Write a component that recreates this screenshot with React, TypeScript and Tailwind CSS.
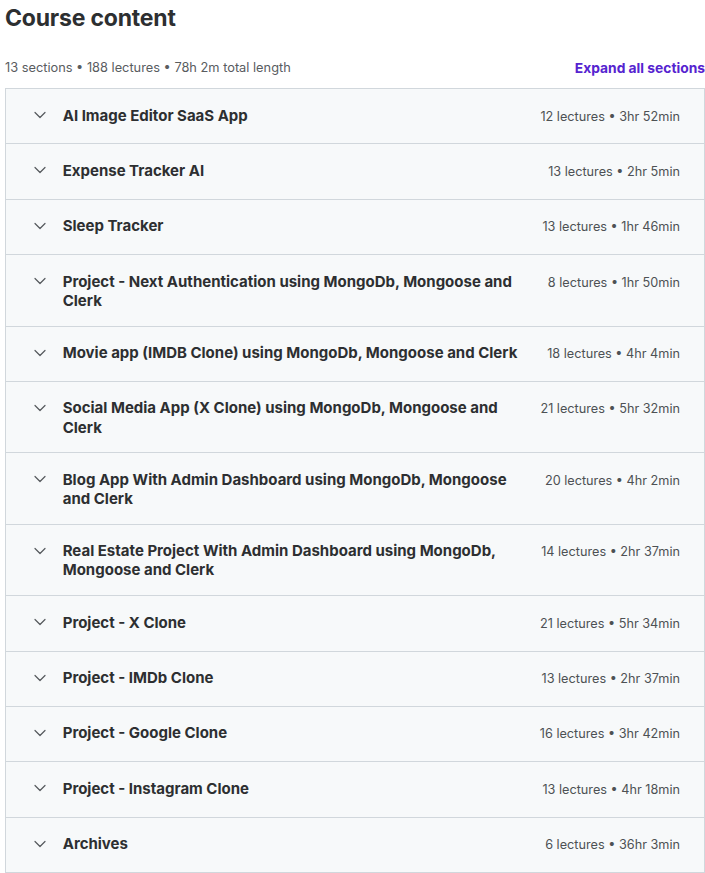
import React from "react";

type Section = { title: string; meta: string };

const sections: Section[] = [
  { title: "AI Image Editor SaaS App", meta: "12 lectures • 3hr 52min" },
  { title: "Expense Tracker AI", meta: "13 lectures • 2hr 5min" },
  { title: "Sleep Tracker", meta: "13 lectures • 1hr 46min" },
  { title: "Project - Next Authentication using MongoDb, Mongoose and Clerk", meta: "8 lectures • 1hr 50min" },
  { title: "Movie app (IMDB Clone) using MongoDb, Mongoose and Clerk", meta: "18 lectures • 4hr 4min" },
  { title: "Social Media App (X Clone) using MongoDb, Mongoose and Clerk", meta: "21 lectures • 5hr 32min" },
  { title: "Blog App With Admin Dashboard using MongoDb, Mongoose and Clerk", meta: "20 lectures • 4hr 2min" },
  { title: "Real Estate Project With Admin Dashboard using MongoDb, Mongoose and Clerk", meta: "14 lectures • 2hr 37min" },
  { title: "Project - X Clone", meta: "21 lectures • 5hr 34min" },
  { title: "Project - IMDb Clone", meta: "13 lectures • 2hr 37min" },
  { title: "Project - Google Clone", meta: "16 lectures • 3hr 42min" },
  { title: "Project - Instagram Clone", meta: "13 lectures • 4hr 18min" },
  { title: "Archives", meta: "6 lectures • 36hr 3min" },
];

function Chevron() {
  return (
    <svg width="16" height="16" viewBox="0 0 16 16" fill="none" className="shrink-0 text-[#55595c]">
      <path d="M3 5.5 8 10.5l5-5" stroke="currentColor" strokeWidth="1.2" strokeLinecap="round" strokeLinejoin="round" />
    </svg>
  );
}

export default function App() {
  return (
    <div className="w-[705px] bg-white pl-[5px] text-[#2d2f31]" style={{ fontFamily: "Inter, 'Noto Sans', sans-serif" }}>
      <h2 className="pt-[3px] text-[23px] font-bold leading-[30px] tracking-[-0.2px]">Course content</h2>
      <div className="mt-[25px] flex items-center justify-between pb-[10px]">
        <span className="text-[12.8px] leading-[20px] text-[#595c5f]">13 sections • 188 lectures • 78h 2m total length</span>
        <button className="text-[13.8px] font-bold leading-[20px] text-[#5624d0]">Expand all sections</button>
      </div>
      <div className="w-[700px] border border-[#d1d7dc]">
        {sections.map((s, i) => (
          <div
            key={i}
            className={`flex items-start bg-[#f7f9fa] pt-[16.5px] pb-[15.5px] pl-[26px] pr-[24px] ${i > 0 ? "border-t border-[#d1d7dc]" : ""}`}
          >
            <div className="flex min-h-[22.4px] flex-1 items-start gap-[14.7px]">
              <div className="flex h-[19.2px] items-center">
                <Chevron />
              </div>
              <span className="max-w-[460px] text-[15px] font-bold leading-[19.2px]">{s.title}</span>
            </div>
            <span className="ml-4 shrink-0 pt-[1px] text-[12.7px] leading-[19.2px] text-[#4d5154]">{s.meta}</span>
          </div>
        ))}
      </div>
    </div>
  );
}
